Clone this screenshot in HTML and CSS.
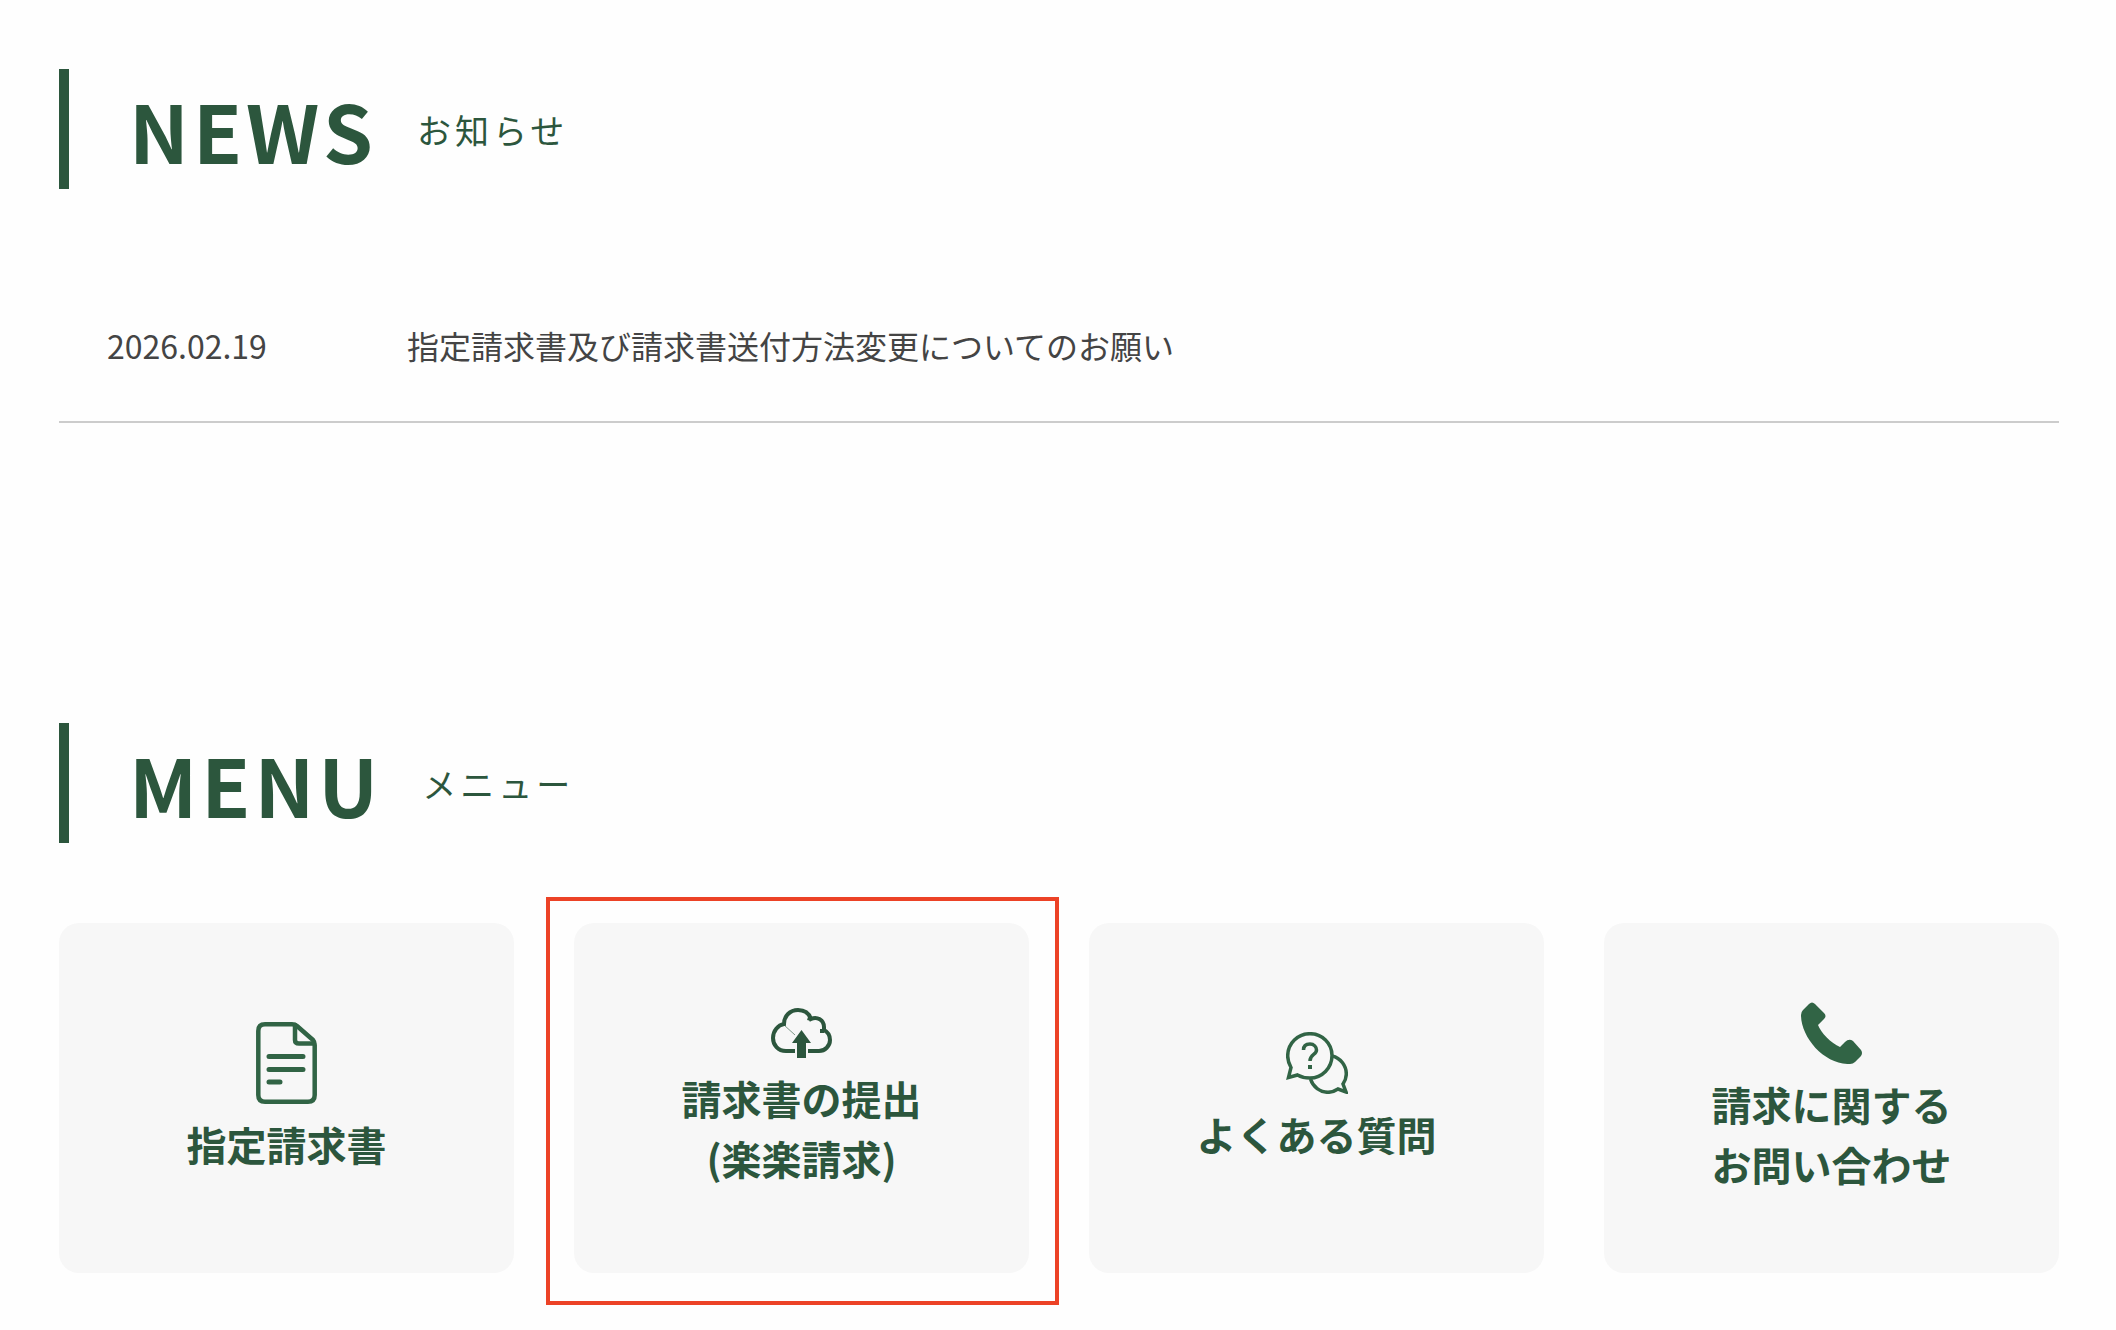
FILE: index.html
```html
<!DOCTYPE html>
<html lang="ja">
<head>
  <meta charset="UTF-8">
  <meta name="viewport" content="width=device-width, initial-scale=1.0">
  <title>お知らせ・メニュー</title>
  <link rel="stylesheet" href="styles.css">
</head>
<body>
  <main class="container">
    <section class="news">
      <h2 class="heading">NEWS<span class="heading-sub">お知らせ</span></h2>
      <ul class="news-list">
        <li>
          <a href="#" class="news-item">
            <time class="news-date" datetime="2026-02-19">2026.02.19</time>
            <span class="news-title">指定請求書及び請求書送付方法変更についてのお願い</span>
          </a>
        </li>
      </ul>
    </section>

    <section class="menu">
      <h2 class="heading">MENU<span class="heading-sub">メニュー</span></h2>
      <div class="menu-list">
        <a href="#" class="card">
          <svg class="icon" width="62" height="82" viewBox="0 0 62 82" fill="none" stroke="currentColor" stroke-width="4.500" stroke-linecap="round" stroke-linejoin="round" aria-hidden="true">
            <path d="M9 2.300H36Q39 2.300 41 4L57 18Q58.700 20 58.700 23V73Q58.700 79.700 52 79.700H9Q2.300 79.700 2.300 73V9Q2.300 2.300 9 2.300Z"/>
            <path d="M39 3V18Q39 21.500 43 21.500H58"/>
            <path d="M13 34.500H47M13 47.500H47M13 60H24" stroke-width="5"/>
          </svg>
          <span class="card-text">指定請求書</span>
        </a>

        <a href="#" class="card card-marked">
          <svg class="icon icon-dark" width="62" height="50" viewBox="0 0 62 50" fill="none" stroke="currentColor" stroke-width="4" aria-hidden="true">
            <path d="M24 43H15C7 43 2 37 2 30C2 23 7 17 13 16C13 8 19 2 27 2C33 2 38 5 40 11C46 8 53 12 53 19V22C57 24 59 28 59 32C59 38 54 43 48 43H37"/>
            <path d="M38 12.500L39 9M49 23H53"/>
            <path d="M13 17L24 27" stroke-width="1" opacity=".6"/>
            <path d="M30.500 22L40 35H35V50H26V35H21Z" fill="currentColor" stroke="none"/>
          </svg>
          <span class="card-text">請求書の提出<br>(楽楽請求)</span>
        </a>

        <a href="#" class="card">
          <svg class="icon" width="62" height="62" viewBox="0 0 62 62" fill="none" stroke="currentColor" stroke-width="3.500" aria-hidden="true">
            <path d="M2.500 45.500L5 35.500C2.500 31 1.700 28 1.700 24C1.700 11 12 1.700 24 1.700C36 1.700 46 11 46 23.500C46 36 36 46 24 46C20 46 15 45 11.500 43Z"/>
            <path d="M46 24C55 26 60.300 34 60.300 42C60.300 46 59 49 57 52L60 60L52 57C49 59 46 60.300 42 60.300C34 60.300 27 55 24.500 47"/>
            <path d="M17.500 18C17.500 14 20 12 24 12C28 12 30.500 15 30.500 18C30.500 23 24 22 24 29"/>
            <path d="M22 33H26V37H22Z" fill="currentColor" stroke="none"/>
          </svg>
          <span class="card-text">よくある質問</span>
        </a>

        <a href="#" class="card">
          <svg class="icon" width="62" height="62" viewBox="0 0 62 62" fill="currentColor" aria-hidden="true">
            <path d="M2 8L8 2Q11 -1 14 2L23 11Q26 14 23 17L17 23C20 31 30 41 39 45L44 40Q48 36 52 39L60 48Q62 51 60 54L54 60Q52 62 49 62C24 63 0 36 0 13Q0 10 2 8Z"/>
          </svg>
          <span class="card-text">請求に関する<br>お問い合わせ</span>
        </a>
      </div>
    </section>
  </main>
</body>
</html>
```
FILE: styles.css
```css
:root {
  --main-color: #2c563d;
  --icon-color: #316445;
  --text-color: #444;
  --line-color: #ccc;
  --card-color: #f7f7f7;
  --mark-color: #ec4226;
}
* {
  box-sizing: border-box;
}
body {
  margin: 0;
  background-color: #fefefe;
  color: var(--text-color);
  font-family: "Noto Sans CJK JP", sans-serif;
  font-size: 32px;
  line-height: 1.5;
}
a {
  color: inherit;
  text-decoration: none;
}
.container {
  padding: 69px 57px 57px 59px;
}
.heading {
  display: flex;
  align-items: center;
  gap: 40px;
  margin: 0 0 80px;
  padding-left: 60px;
  border-left: 10px solid var(--main-color);
  color: var(--main-color);
  font-size: 80px;
  font-weight: 700;
  letter-spacing: 4px;
}
.heading-sub {
  font-size: 34px;
  font-weight: 400;
}

/* NEWS */
.news {
  margin-bottom: 300px;
}
.news-list {
  margin: 0;
  padding: 0;
  list-style: none;
}
.news-item {
  display: flex;
  padding: 52px 48px;
  border-bottom: 2px solid var(--line-color);
}
.news-date {
  width: 300px;
}

/* MENU */
.menu-list {
  display: grid;
  grid-template-columns: repeat(4, 1fr);
  gap: 60px;
}
.card {
  position: relative;
  display: flex;
  flex-direction: column;
  align-items: center;
  justify-content: center;
  gap: 10px;
  min-height: 350px;
  border-radius: 20px;
  background-color: var(--card-color);
}
.card-text {
  color: var(--main-color);
  font-size: 40px;
  font-weight: 700;
  text-align: center;
}
.card-marked::after {
  content: "";
  position: absolute;
  inset: -26px -30px -32px -28px;
  border: 4px solid var(--mark-color);
}
.icon {
  display: block;
  color: var(--icon-color);
}
.icon-dark {
  color: var(--main-color);
}
```
